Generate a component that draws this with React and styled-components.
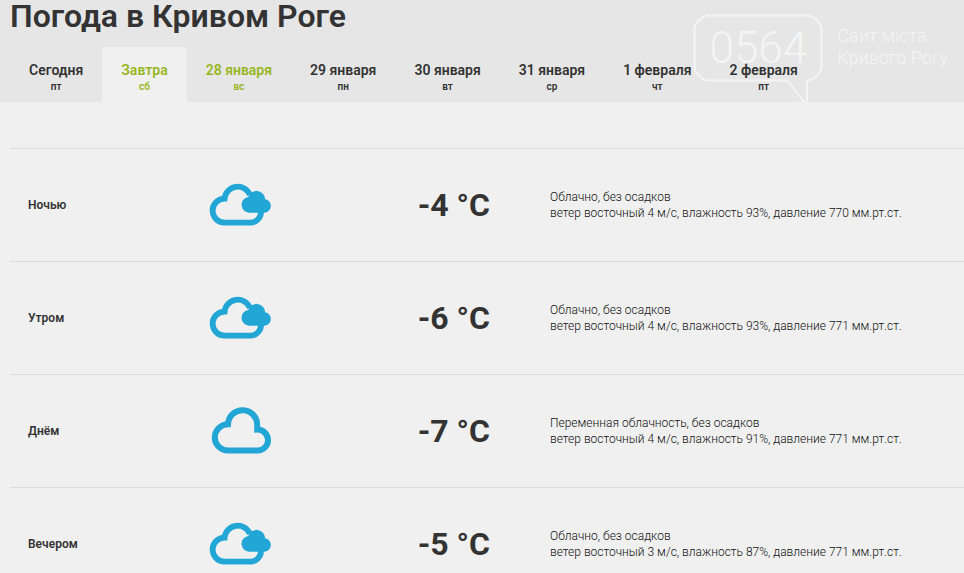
import styled, { createGlobalStyle } from 'styled-components';

const days = [
  { label: 'Сегодня', weekday: 'пт' },
  { label: 'Завтра', weekday: 'сб', active: true },
  { label: '28 января', weekday: 'вс', weekend: true },
  { label: '29 января', weekday: 'пн' },
  { label: '30 января', weekday: 'вт' },
  { label: '31 января', weekday: 'ср' },
  { label: '1 февраля', weekday: 'чт' },
  { label: '2 февраля', weekday: 'пт' },
];

const forecast = [
  {
    time: 'Ночью',
    icon: 'overcast',
    temp: '-4 °C',
    sky: 'Облачно, без осадков',
    details: 'ветер восточный 4 м/с, влажность 93%, давление 770 мм.рт.ст.',
  },
  {
    time: 'Утром',
    icon: 'overcast',
    temp: '-6 °C',
    sky: 'Облачно, без осадков',
    details: 'ветер восточный 4 м/с, влажность 93%, давление 771 мм.рт.ст.',
  },
  {
    time: 'Днём',
    icon: 'cloud',
    temp: '-7 °C',
    sky: 'Переменная облачность, без осадков',
    details: 'ветер восточный 4 м/с, влажность 91%, давление 771 мм.рт.ст.',
  },
  {
    time: 'Вечером',
    icon: 'overcast',
    temp: '-5 °C',
    sky: 'Облачно, без осадков',
    details: 'ветер восточный 3 м/с, влажность 87%, давление 771 мм.рт.ст.',
  },
];

function WeatherIcon({ type }) {
  if (type === 'cloud') {
    return (
      <IconSvg viewBox="0 0 64 48" aria-hidden="true">
        <path
          d="M20 43.6a13.2 13.2 0 0 1 0-26.4A14.6 14.6 0 0 1 49.2 18.4v4.2A10.5 10.5 0 0 1 49.8 43.6Z"
          fill="none"
          stroke="currentColor"
          strokeWidth="6"
        />
      </IconSvg>
    );
  }

  return (
    <IconSvg viewBox="0 0 64 48" aria-hidden="true">
      <path
        d="M53 30v1a10.6 10.6 0 0 1-10.6 10.6H16.6a12 12 0 0 1 0-24A13.2 13.2 0 0 1 42 14"
        fill="none"
        stroke="currentColor"
        strokeWidth="5.8"
      />
      <path
        d="M41.2 31.7a7.9 7.9 0 0 1-1-15.7A8.7 8.7 0 0 1 57.2 18.2A6.8 6.8 0 0 1 56.3 31.7Z"
        fill="currentColor"
      />
    </IconSvg>
  );
}

export default function App() {
  return (
    <>
      <GlobalStyle />
      <Header>
        <SiteLogo href="#">
          <Bubble>
            <BubbleShape viewBox="0 0 130 89" aria-hidden="true">
              <path
                d="M94.5 66.5H17A15.5 15.5 0 0 1 1.5 51V17A15.5 15.5 0 0 1 17 1.5h96A15.5 15.5 0 0 1 128.5 17v34A15.5 15.5 0 0 1 114 66.5V86.5q-2 2.5-4 0Z"
                fill="none"
                stroke="currentColor"
                strokeWidth="2"
              />
            </BubbleShape>
            <Code>0564</Code>
          </Bubble>
          <SiteName>
            Сайт міста
            <br />
            Кривого Рогу
          </SiteName>
        </SiteLogo>
        <Title>Погода в Кривом Роге</Title>
        <Tabs>
          {days.map((day) => (
            <Tab
              key={day.label}
              type="button"
              $active={day.active}
              $green={day.active || day.weekend}
              aria-pressed={Boolean(day.active)}
            >
              <TabLabel>{day.label}</TabLabel>
              <Weekday>{day.weekday}</Weekday>
            </Tab>
          ))}
        </Tabs>
      </Header>

      <Main>
        <Table>
          <tbody>
            {forecast.map((row) => (
              <Row key={row.time}>
                <TimeCell scope="row">{row.time}</TimeCell>
                <IconCell>
                  <WeatherIcon type={row.icon} />
                </IconCell>
                <TempCell>{row.temp}</TempCell>
                <InfoCell>
                  {row.sky}
                  <br />
                  {row.details}
                </InfoCell>
              </Row>
            ))}
          </tbody>
        </Table>
      </Main>
    </>
  );
}

const GlobalStyle = createGlobalStyle`
  body {
    margin: 0;
    background: #f0f0f0;
    color: #333;
    font-family: Roboto, "Liberation Sans", sans-serif;
  }
`;

const Header = styled.header`
  position: relative;
  padding-left: 10px;
  background: #e6e6e6;
`;

const Title = styled.h1`
  margin: 0;
  padding-bottom: 15px;
  font-size: 32px;
  line-height: 32px;
  font-weight: 600;
`;

const Tabs = styled.nav`
  position: relative;
  display: flex;
`;

const Tab = styled.button`
  display: flex;
  flex-direction: column;
  align-items: center;
  padding: 14px 19px 7px;
  border: 0;
  background: ${({ $active }) => ($active ? '#f0f0f0' : 'transparent')};
  color: ${({ $green }) => ($green ? '#97b71e' : '#333')};
  font-family: inherit;
  font-weight: 600;
  white-space: nowrap;
  cursor: pointer;
`;

const TabLabel = styled.span`
  font-size: 14px;
  line-height: 18px;
`;

const Weekday = styled.span`
  font-size: 10px;
  line-height: 16px;
`;

/* sits behind the title and the day tabs */
const SiteLogo = styled.a`
  position: absolute;
  top: 14px;
  right: 16px;
  display: flex;
  gap: 14px;
  color: #f4f4f4;
  text-decoration: none;
  font-weight: 300;
`;

const Bubble = styled.span`
  position: relative;
  width: 130px;
  height: 89px;
`;

const BubbleShape = styled.svg`
  display: block;
  width: 100%;
  height: 100%;
`;

const Code = styled.span`
  position: absolute;
  top: 8px;
  left: 0;
  width: 100%;
  text-align: center;
  font-size: 44px;
  line-height: 52px;
`;

const SiteName = styled.span`
  padding-top: 11px;
  font-size: 18px;
  line-height: 22px;
`;

const Main = styled.main`
  padding: 46px 0 0 10px;
  overflow: hidden;
`;

const Table = styled.table`
  width: 100%;
  border-collapse: separate;
  border-spacing: 0;
  table-layout: fixed;

  th,
  td {
    padding: 0;
    height: 112px;
    border-top: 1px solid #dcdcdc;
    text-align: left;
    vertical-align: middle;
  }
`;

const Row = styled.tr`
  line-height: 16px;
`;

const TimeCell = styled.th`
  && {
    width: 180px;
    padding-left: 18px;
  }
  font-size: 12px;
  font-weight: 600;
`;

const IconCell = styled.td`
  width: 96px;
  color: #21a6d6;
`;

const IconSvg = styled.svg`
  display: block;
  width: 64px;
  height: 48px;
`;

const TempCell = styled.td`
  && {
    width: 186px;
    padding-right: 60px;
    text-align: right;
  }
  font-size: 32px;
  font-weight: 700;
`;

const InfoCell = styled.td`
  color: #111;
  font-size: 12px;
  font-weight: 300;
`;
